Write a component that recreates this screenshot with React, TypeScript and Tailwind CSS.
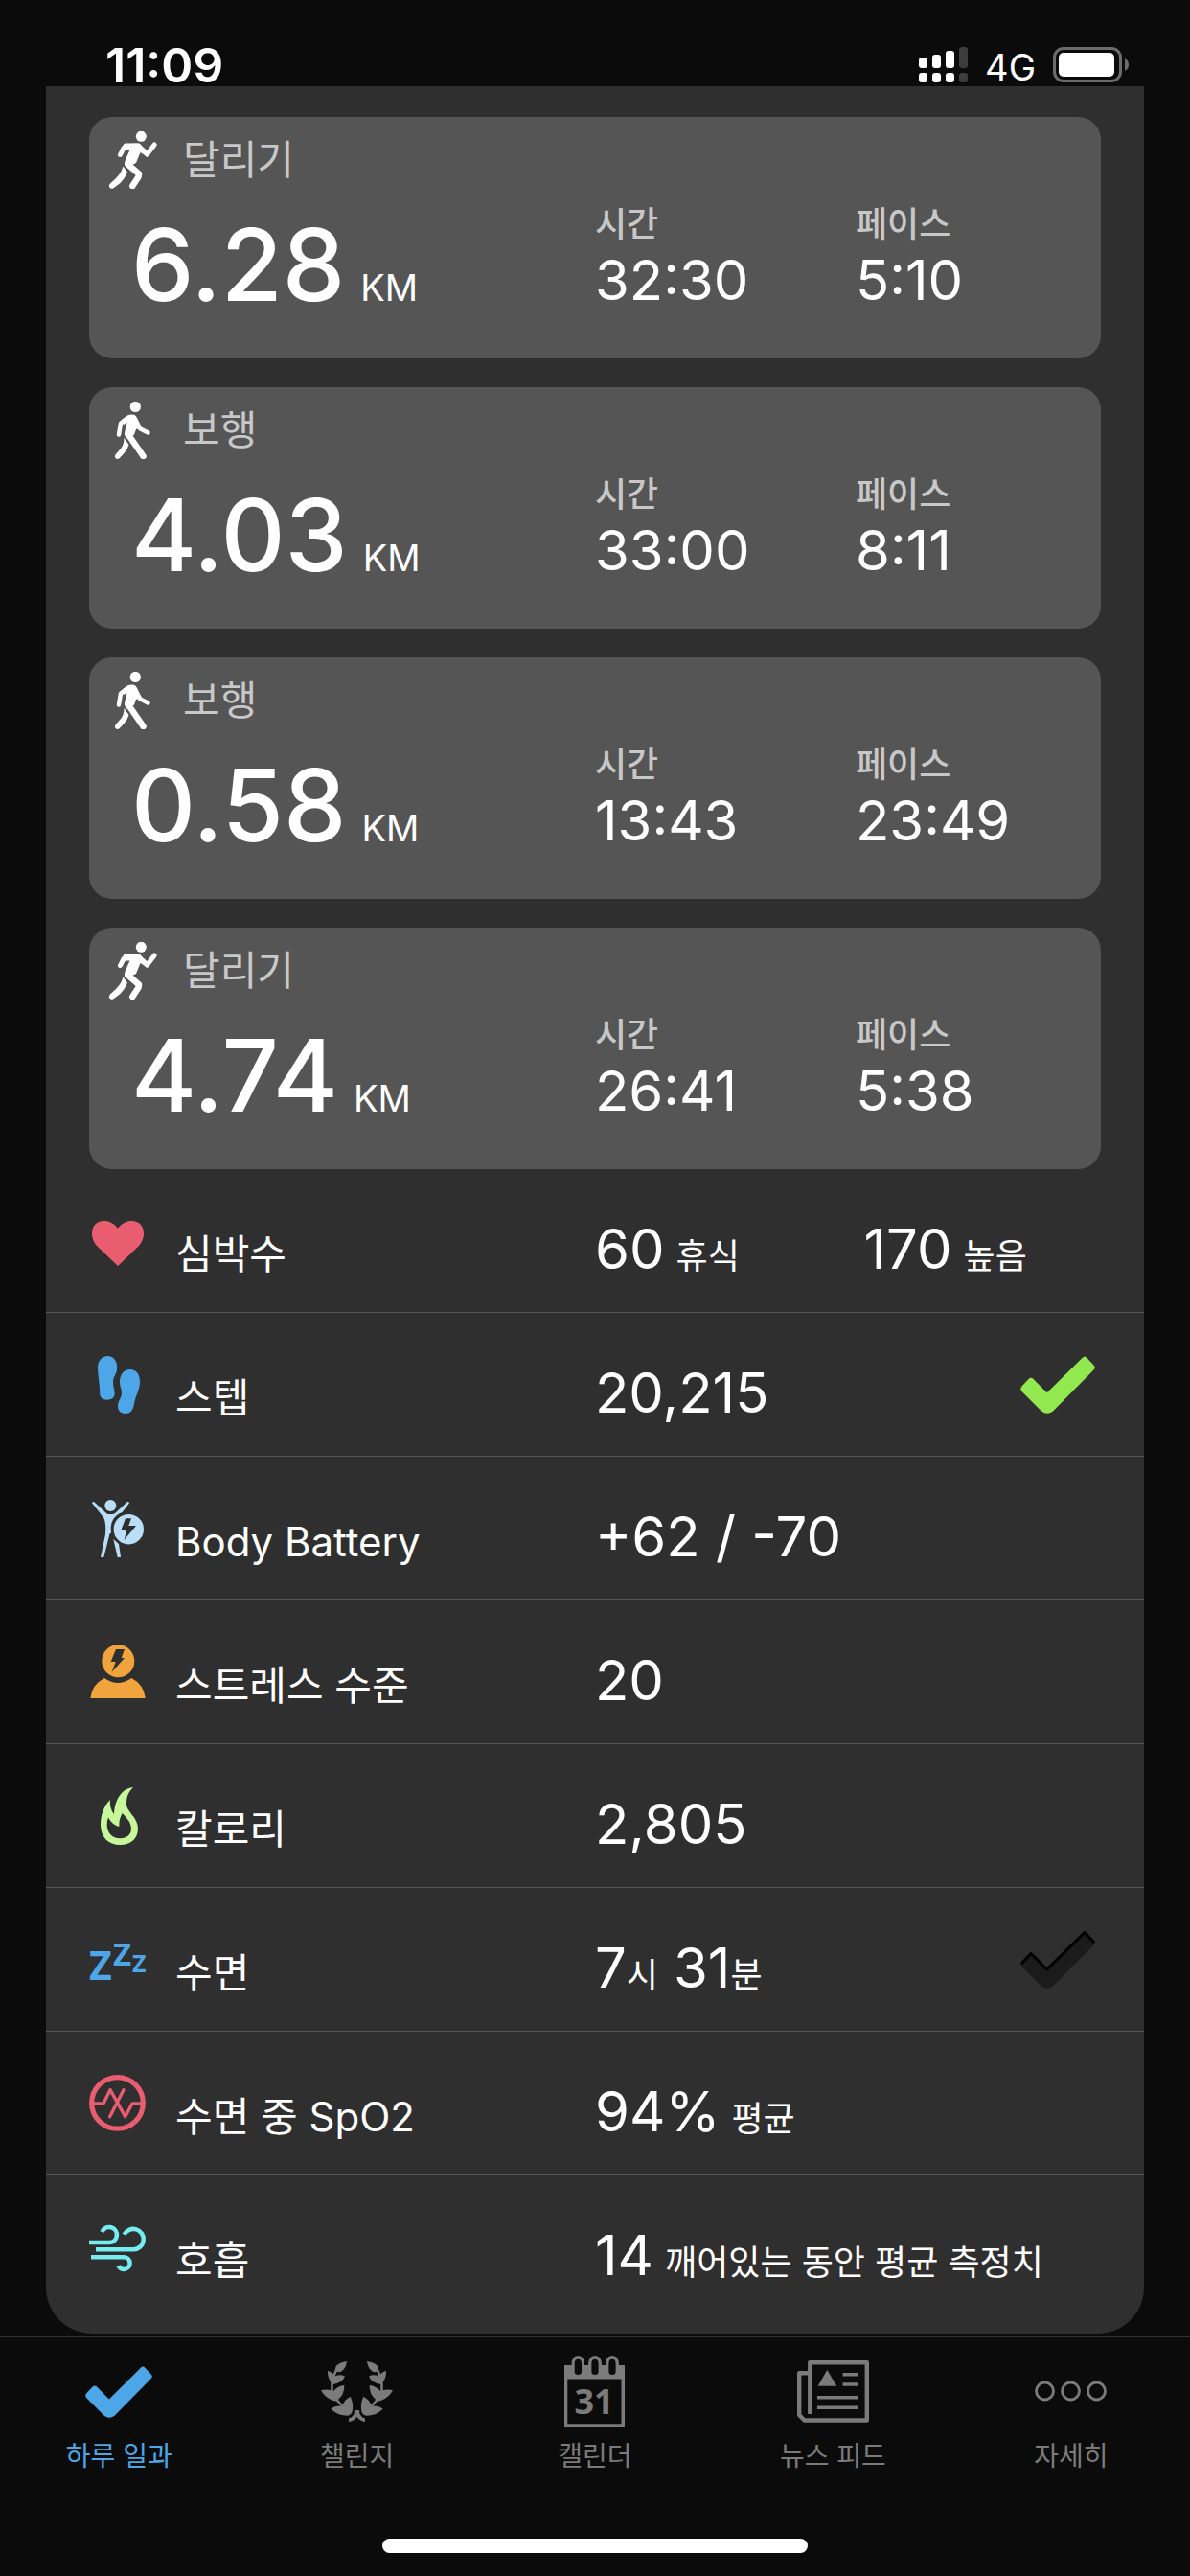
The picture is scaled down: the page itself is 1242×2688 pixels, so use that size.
import React from 'react';

type Activity = { kind: 'run' | 'walk'; distance: string; time: string; pace: string };

type Segment = { value: string; unit?: string };

type Metric = {
  label: string;
  icon: React.ReactNode;
  segments: Segment[];
  layout?: 'columns' | 'tight';
  goal?: 'done' | 'pending';
};

const activities: Activity[] = [
  { kind: 'run', distance: '6.28', time: '32:30', pace: '5:10' },
  { kind: 'walk', distance: '4.03', time: '33:00', pace: '8:11' },
  { kind: 'walk', distance: '0.58', time: '13:43', pace: '23:49' },
  { kind: 'run', distance: '4.74', time: '26:41', pace: '5:38' },
];

const iconClass = 'w-[60px] h-[60px] shrink-0';

const CHECK = 'M1.5 31.5L8.5 24Q11 21.5 13.5 24L27.7 38.3L64.5 2Q67 -1 69.5 2L76.5 9.5Q79 12 76.5 14.5L34 57.5Q28 62 22 57.5L1.5 37Q-1 34.3 1.5 31.5Z';

const RunIcon = () => (
  <svg viewBox="0 0 60 60" className={iconClass} fill="none" stroke="#fff" strokeLinecap="round" strokeLinejoin="round">
    <circle cx="38.3" cy="5.3" r="5.5" fill="#fff" stroke="none" />
    <path d="M20 13.5Q22 12.3 35 12.2Q37.5 12.5 39 15L44 20.5L43 25.5L37.5 22L33 33L29 35L21 36Q20.5 33 22 29.5L26.5 19.5H21Z" fill="#fff" stroke="none" />
    <path d="M22.5 15L19.5 18.5L16.5 24.5M44.5 24L52.2 14" strokeWidth="5" />
    <path d="M40 19.5L44.5 23.8" strokeWidth="5" />
    <path d="M24.5 34.5L36 44.5L35.5 47.5L29.3 57" strokeWidth="6.5" />
    <path d="M19.3 36.5L24 42.5Q21.5 49 16.5 54L9.5 59.2Q7 60.5 5.5 58.8Q4 56.5 6 54.5L12 49Q18 43 19.3 36.5Z" fill="#fff" stroke="none" />
  </svg>
);

const WalkIcon = () => (
  <svg viewBox="0 0 60 60" className={iconClass} fill="none" stroke="#fff" strokeLinecap="round" strokeLinejoin="round">
    <circle cx="32.3" cy="5.5" r="5.6" fill="#fff" stroke="none" />
    <path d="M18 19L24 14.5Q27 12.8 31 13.8Q33 14.5 34 17L38.5 26L33 29L31 34.5L24.5 39Q20.5 36.5 21 32.5L23.5 22L20 24Z" fill="#fff" stroke="none" />
    <path d="M24 17.5L17 22.5L15 34.5" strokeWidth="4.5" />
    <path d="M35 25.5L37.5 28.5L45.5 32.5" strokeWidth="4.5" />
    <path d="M26 36L40.5 57" strokeWidth="6.5" />
    <path d="M20.5 38L25.5 45Q24 50.5 20 54.5L15.5 59.2Q13.5 60.5 11.8 59.3Q10 57.5 11.8 55L17.5 48.5Q20.5 44.5 20.5 38Z" fill="#fff" stroke="none" />
  </svg>
);

const CheckMark = ({ className, fill }: { className: string; fill: string }) => (
  <svg viewBox="0 0 78 60" className={className}>
    <path d={CHECK} fill={fill} />
  </svg>
);

const metrics: Metric[] = [
  {
    label: '심박수',
    icon: (
      <svg viewBox="0 0 60 60" className={iconClass} fill="#ea5d71">
        <path d="M30 16.7C26 11.5 21 9 15.5 9C8 9 3 14 3 22.5C3 28 5.5 32 8.5 35.5L30 56L51.5 35.5C54.5 32 57 28 57 22.5C57 14 52 9 44.5 9C39 9 34 11.5 30 16.7Z" />
      </svg>
    ),
    segments: [{ value: '60', unit: '휴식' }, { value: '170', unit: '높음' }],
    layout: 'columns',
  },
  {
    label: '스텝',
    icon: (
      <svg viewBox="0 0 60 60" className={iconClass} fill="#4da6e8">
        <path d="M19.3 0C25.5 0 29.2 5 29.2 12C29.2 19 25 21 25 27C25 32 26.7 35 26.7 39C26.7 43.5 23.5 45.7 18.6 45.7C14 45.7 11.2 43.5 11.2 39C11.2 29 9 20 9 12C9 5 13.5 0 19.3 0Z" />
        <path d="M42.7 14C49 14 53 19 53 27C53 35 48.5 41 46.5 52C45.5 57 42.5 60 38 60C33 60 30 57 30 52C30 46.5 34 44 34 38.3C34 34 32 32 32 27C32 19 36.5 14 42.7 14Z" />
      </svg>
    ),
    segments: [{ value: '20,215' }],
    goal: 'done',
  },
  {
    label: 'Body Battery',
    icon: (
      <svg viewBox="0 0 60 60" className={iconClass} fill="#b9def5">
        <circle cx="22.3" cy="6" r="6" />
        <path d="M3.2 3.5Q3 1.5 5 2L18.5 14.5Q22.3 15.5 26.5 14.5L40 2Q42 1.5 42 3.5L34.5 13Q26 16 23.5 24Q22 29 23 34.5L21.5 35.5L15.3 60H12L17 36Q18 26 15.5 19Z" />
        <path d="M25.3 41L31 46L33 60H29.7Z" />
        <path fillRule="evenodd" d="M41.3 15a15.7 15.7 0 1 1 0 31.4a15.7 15.7 0 1 1 0-31.4ZM38 19.3L33.3 31.7L39 32.3L36.7 41.7L49 27H41.3L44 19.3Z" />
      </svg>
    ),
    segments: [{ value: '+62 / -70' }],
  },
  {
    label: '스트레스 수준',
    icon: (
      <svg viewBox="0 0 60 60" className={iconClass} fill="#f1a33c">
        <path fillRule="evenodd" d="M30.3 1.3a17 17 0 1 1 0 34a17 17 0 1 1 0-34ZM28 6L22.7 19H27.7L23.7 29.7L37 15H33.7L37 6Z" />
        <path d="M1.3 57Q3 42.5 16 36Q30 46 44.3 36Q57 42.5 58.7 57Z" />
      </svg>
    ),
    segments: [{ value: '20' }],
  },
  {
    label: '칼로리',
    icon: (
      <svg viewBox="0 0 60 60" className={iconClass} fill="#c6f79a">
        <path fillRule="evenodd" d="M46 0C36 1 27 10 26 28Q21 22 22 13C15 20 12 29 12 39C12 52 20 60 32.5 60C44 60 51 53 51 43C51 31 39 26 39 17C39 10 41 5 46 0ZM20 31.5Q24 39 31.3 41Q31 33 34.7 27Q44 36 44 43C44 49 39.5 53.3 32.5 53.3C24 53.3 18.5 47 18.7 39Q18.8 34 20 31.5Z" />
      </svg>
    ),
    segments: [{ value: '2,805' }],
  },
  {
    label: '수면',
    icon: (
      <svg viewBox="0 0 60 60" className={`${iconClass} overflow-visible font-['Open_Sans'] font-bold`} fill="#4da6e8">
        <text x="0" y="51" fontSize="41">Z</text>
        <text x="25" y="36" fontSize="33">Z</text>
        <text x="45" y="43" fontSize="25">Z</text>
      </svg>
    ),
    segments: [{ value: '7', unit: '시' }, { value: '31', unit: '분' }],
    layout: 'tight',
    goal: 'pending',
  },
  {
    label: '수면 중 SpO2',
    icon: (
      <svg viewBox="0 0 60 60" className={iconClass} fill="none" stroke="#ea5d71" strokeLinecap="round" strokeLinejoin="round">
        <circle cx="29.5" cy="29.4" r="26.8" strokeWidth="5.2" />
        <path d="M4 30H15L22 15.7L37.7 43.7L45 30H55M36 15.7L21.6 43.7" strokeWidth="3.4" />
      </svg>
    ),
    segments: [{ value: '94%', unit: '평균' }],
  },
  {
    label: '호흡',
    icon: (
      <svg viewBox="0 0 60 60" className={iconClass} fill="none" stroke="#74ecf0" strokeWidth="4.6">
        <path d="M0 25H21a8 8 0 1 0-7.5-11M7 32.3H46.5a10.7 10.7 0 1 0-10-15.5M2 40.3H36.6a6.3 6.3 0 1 1-6 9" />
      </svg>
    ),
    segments: [{ value: '14', unit: '깨어있는 동안 평균 측정치' }],
  },
];

const LaurelHalf = () => (
  <g>
    <path d="M27 6Q26 14 20.5 17Q17 17.5 15 16Q14.5 11 18 9Q22 6.5 27 6Z" />
    <path d="M7 16Q12 17 14.3 21.5Q20 19 25 21.5Q22 29 12.5 30Q6.5 24 7 16Z" />
    <path d="M0 36Q8 34.5 13 37Q18 31.5 24.3 31Q25 40 17 47Q15 48 12 46.7Q3 43 0 36Z" />
    <path d="M10.3 55.5Q16 51.5 22 53Q24 46 30.7 42.7Q34.5 51 32.5 59Q31 62.5 26.7 62.7Q16 62 10.3 55.5Z" />
    <path d="M16 15L13 22M11.5 27V38M15.5 45L23.5 54" fill="none" stroke="#7b7b7b" strokeWidth="2.6" />
  </g>
);

const tabs = [
  {
    label: '하루 일과',
    icon: <CheckMark className="w-[70px] h-[54px]" fill="#4da6e8" />,
    active: true,
  },
  {
    label: '챌린지',
    icon: (
      <svg viewBox="0 0 75 75" className="w-[75px] h-[75px]" fill="#7b7b7b">
        <LaurelHalf />
        <g transform="translate(75 0) scale(-1 1)">
          <LaurelHalf />
        </g>
        <path d="M35 57H40L40.5 61Q43 65 46 65.5V69Q41 68.5 37.5 64Q34 68.5 29 69V65.5Q32 65 34.5 61Z" />
      </svg>
    ),
  },
  {
    label: '캘린더',
    icon: (
      <svg viewBox="0 0 63 75" className="w-[63px] h-[75px]" fill="#7b7b7b">
        <path fillRule="evenodd" d="M0 10H7.5Q7.5 0 14.3 0T21 10H25Q25 0 32 0T39 10H43Q43 0 50 0T57 10H63V75H0ZM3.3 24.5V71.3H59.5V24.5ZM14.3 3.7Q10.7 3.7 10.7 8V17Q10.7 20 14.3 20T18 17V8Q18 3.7 14.3 3.7ZM32 3.7Q28.4 3.7 28.4 8V17Q28.4 20 32 20T35.6 17V8Q35.6 3.7 32 3.7ZM50 3.7Q46.4 3.7 46.4 8V17Q46.4 20 50 20T53.6 17V8Q53.6 3.7 50 3.7Z" />
        <text x="31" y="60.5" fontSize="36" textAnchor="middle" className="font-['Open_Sans'] font-bold">31</text>
      </svg>
    ),
  },
  {
    label: '뉴스 피드',
    icon: (
      <svg viewBox="0 0 75 65" className="w-[75px] h-[65px]" fill="none" stroke="#7b7b7b" strokeWidth="4.4" strokeLinejoin="round">
        <path d="M13.3 56V2.2H72.8V62.5H7.5L2.2 57V13.3H13.3" />
        <path d="M47.5 14.7H64M47.5 25H64M21 38.7H64M21 49.3H64" strokeWidth="3.6" />
        <path d="M31.3 10L41.3 26.7H21.7Z" fill="#7b7b7b" stroke="none" />
      </svg>
    ),
  },
  {
    label: '자세히',
    icon: (
      <svg viewBox="0 0 75 22" className="w-[75px] h-[22px]" fill="none" stroke="#7b7b7b" strokeWidth="2.8">
        <circle cx="10.5" cy="10" r="9" />
        <circle cx="37.5" cy="10" r="9" />
        <circle cx="64.5" cy="10" r="9" />
      </svg>
    ),
  },
];

function StatusBar() {
  return (
    <header className="flex h-[90px] items-end justify-between pl-[110px] pr-16 pb-1">
      <time className="text-[50px] leading-9 font-semibold">11:09</time>
      <div className="flex items-end gap-[18px]">
        <svg viewBox="0 0 51 37" className="w-[51px] h-[37px]" fill="#fff">
          <rect x="0" y="11" width="9" height="11" rx="3" />
          <rect x="14" y="8" width="9" height="14" rx="3" />
          <rect x="28" y="4" width="9" height="18" rx="3" />
          <rect x="42" y="0" width="9" height="22" rx="3" fill="#3c3c3c" />
          <rect x="0" y="27" width="9" height="10" rx="3" />
          <rect x="14" y="27" width="9" height="10" rx="3" />
          <rect x="28" y="27" width="9" height="10" rx="3" />
          <rect x="42" y="27" width="9" height="10" rx="3" fill="#3c3c3c" />
        </svg>
        <span className="text-[38px] leading-8">4G</span>
        <svg viewBox="0 0 79 37" className="w-[79px] h-[37px]">
          <rect x="1.5" y="1.5" width="69" height="34" rx="9.5" fill="none" stroke="#6c6c6c" strokeWidth="3" />
          <rect x="6" y="6" width="58" height="25" rx="5" fill="#fff" />
          <path d="M75 12Q79 14 79 18.5T75 25Z" fill="#6c6c6c" />
        </svg>
      </div>
    </header>
  );
}

function ActivityCard({ activity }: { activity: Activity }) {
  const isRun = activity.kind === 'run';
  return (
    <li className="grid h-[252px] grid-cols-2 rounded-3xl bg-[#555555]">
      <div className="flex flex-col justify-between pt-[15px] pb-[46px]">
        <div className="flex items-center gap-[22px] pl-4">
          {isRun ? <RunIcon /> : <WalkIcon />}
          <h2 className="text-[42px] leading-[60px] text-[#c8c8c8]">{isRun ? '달리기' : '보행'}</h2>
        </div>
        <p className="flex items-baseline gap-4 pl-11">
          <span className="text-[104px] leading-[104px] font-medium">{activity.distance}</span>
          <span className="text-[38px] leading-10">KM</span>
        </p>
      </div>
      <dl className="grid grid-cols-[17fr_16fr] items-end pb-[52px]">
        <div>
          <dt className="mb-2 text-4xl leading-10 font-medium text-[#c8c8c8]">시간</dt>
          <dd className="text-[58px] leading-[60px]">{activity.time}</dd>
        </div>
        <div>
          <dt className="mb-2 text-4xl leading-10 font-medium text-[#c8c8c8]">페이스</dt>
          <dd className="text-[58px] leading-[60px]">{activity.pace}</dd>
        </div>
      </dl>
    </li>
  );
}

function MetricRow({ metric }: { metric: Metric }) {
  const valuesClass =
    metric.layout === 'columns' ? 'grid flex-1 grid-cols-[17fr_15fr]' : 'flex flex-1 gap-4';
  return (
    <li className="grid h-[150px] grid-cols-2 border-b border-[#555555] px-[45px] pt-[45px] last:border-b-0">
      <div className="flex gap-[30px]">
        {metric.icon}
        <h3 className="pt-[14px] text-[42px] leading-[60px] whitespace-nowrap">{metric.label}</h3>
      </div>
      <div className="flex items-start justify-between">
        <div className={`${valuesClass} pt-2`}>
          {metric.segments.map((segment) => (
            <p key={segment.value} className={`flex items-baseline whitespace-nowrap ${metric.layout === 'tight' ? '' : 'gap-3'}`}>
              <span className="text-[58px] leading-[60px]">{segment.value}</span>
              {segment.unit && <span className="text-4xl leading-10">{segment.unit}</span>}
            </p>
          ))}
        </div>
        {metric.goal === 'done' && <CheckMark className="mr-1.5 w-[78px] h-[60px]" fill="#92e84f" />}
        {metric.goal === 'pending' && (
          <svg viewBox="0 0 78 60" className="mr-1.5 w-[78px] h-[60px]">
            <path d={CHECK} fill="#1b1b1b" />
            <path d="M1 34L11 23.5L27.7 40L67 1.5L77 12" fill="none" stroke="#000" strokeWidth="3" strokeLinejoin="round" />
          </svg>
        )}
      </div>
    </li>
  );
}

export default function App() {
  return (
    <div className="flex min-h-screen flex-col bg-[#0b0b0b] font-[Inter,'Noto_Sans_CJK_KR',sans-serif] text-white">
      <StatusBar />

      <main className="mx-12 mb-[3px] rounded-b-[48px] bg-[#2f2f2f] pt-8 pb-[15px]">
        <ul className="flex flex-col gap-[30px] px-[45px]">
          {activities.map((activity) => (
            <ActivityCard key={activity.distance} activity={activity} />
          ))}
        </ul>
        <ul>
          {metrics.map((metric) => (
            <MetricRow key={metric.label} metric={metric} />
          ))}
        </ul>
      </main>

      {/* Bottom tab bar */}
      <nav className="flex-1 border-t border-[#333333] pt-[19px]">
        <ul className="grid grid-cols-5">
          {tabs.map((tab) => (
            <li key={tab.label}>
              <a href="#" className={`flex flex-col items-center gap-3 ${tab.active ? 'text-[#4da6e8]' : 'text-[#7b7b7b]'}`}>
                <span className="flex h-[75px] items-center">{tab.icon}</span>
                <span className="text-[28px] leading-9">{tab.label}</span>
              </a>
            </li>
          ))}
        </ul>
        <div className="mx-auto mt-[68px] mb-6 h-[15px] w-[444px] rounded-full bg-white" />
      </nav>
    </div>
  );
}
